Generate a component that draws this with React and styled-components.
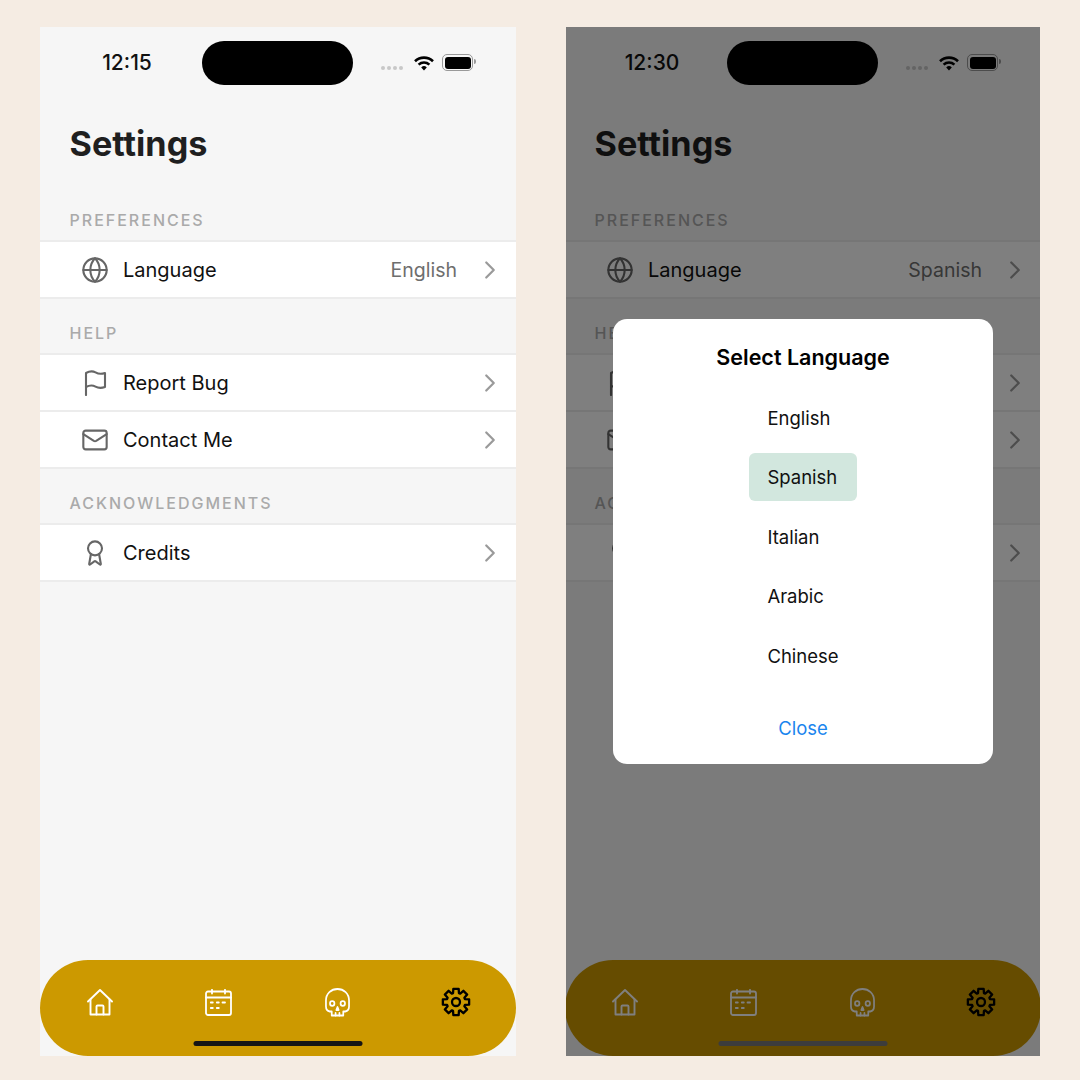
import React from "react";
import styled, { createGlobalStyle } from "styled-components";
import { Globe, Mail, Award, ChevronRight } from "lucide-react";

const Global = createGlobalStyle`
  html, body { margin: 0; padding: 0; }
  body { width: 1080px; height: 1080px; background: #f5ece3; font-family: Inter, "Noto Sans", sans-serif; overflow: hidden; }
`;

const Page = styled.div`
  display: flex;
  gap: 50px;
  padding: 27px 40px 24px;
  height: 1080px;
  box-sizing: border-box;
`;
const Phone = styled.div`
  flex: 0 0 ${(p) => p.$w}px;
  display: flex;
  background: #f6f6f6;
  overflow: hidden;
`;
const ScreenBody = styled.div`
  position: relative;
  flex: 0 0 476px;
  margin-left: ${(p) => p.$shift}px;
  display: flex;
  flex-direction: column;
`;
const StatusBar = styled.div`
  display: flex;
  align-items: flex-start;
  height: 58px;
  padding: 14px 0 0;
`;
const Clock = styled.div`
  width: 162px;
  box-sizing: border-box;
  padding: 9px 0 0 12px;
  text-align: center;
  font-size: 21px;
  line-height: 25px;
  font-weight: 500;
  color: #111;
`;
const Island = styled.div`
  width: 151px;
  height: 44px;
  border-radius: 22px;
  background: #000;
`;
const StatusIcons = styled.div`
  display: flex;
  align-items: center;
  gap: 10px;
  margin-left: 28px;
  padding-top: 14px;
`;
const SignalDots = styled.div`
  display: flex;
  gap: 2px;
  padding-top: 9px;
  margin-right: 1px;
`;
const Dot = styled.span`
  width: 4px;
  height: 4px;
  border-radius: 50%;
  background: #c8c8c8;
`;
const BatteryShell = styled.div`
  position: relative;
  width: 26px;
  height: 12px;
  padding: 1.5px;
  border: 1px solid #999;
  border-radius: 5px;
  margin: -1px 0 0 -2px;
  &::after {
    content: "";
    position: absolute;
    right: -3.5px;
    top: 4px;
    width: 2px;
    height: 5px;
    border-radius: 0 2px 2px 0;
    background: #999;
  }
`;
const BatteryFill = styled.div`
  height: 100%;
  border-radius: 3px;
  background: #000;
`;
const Title = styled.h1`
  margin: 0;
  padding: 22px 0 0 29.5px;
  font-size: 34.2px;
  line-height: 46px;
  font-weight: 650;
  color: #1f1f1f;
`;
const Sections = styled.div`
  display: flex;
  flex-direction: column;
  padding-top: 19px;
`;
const SectionLabel = styled.div`
  height: 54px;
  box-sizing: border-box;
  padding: 24px 0 0 29.5px;
  font-size: 16px;
  line-height: 20px;
  font-weight: 500;
  letter-spacing: 2px;
  color: #aaaaaa;
`;
const Group = styled.div`
  background: #fff;
  border-top: 2px solid #ececec;
`;
const Row = styled.div`
  display: flex;
  align-items: center;
  height: 55px;
  padding: 0 11px 0 41px;
  border-bottom: 2px solid #ececec;
`;
const RowIcon = styled.div`
  width: 28px;
  height: 28px;
  display: flex;
  align-items: center;
  justify-content: center;
  color: #666;
`;
const RowLabel = styled.div`
  margin-left: 14px;
  flex: 1;
  font-size: 20px;
  line-height: 26px;
  font-weight: 400;
  color: #111;
`;
const RowValue = styled.div`
  font-size: 19.5px;
  line-height: 26px;
  color: #6e6e6e;
  margin-right: 18px;
`;
const Chevron = styled(ChevronRight)`
  color: #9a9a9a;
`;
const TabBar = styled.div`
  margin-top: auto;
  height: 96px;
  border-radius: 48px;
  background: #cc9900;
  display: flex;
  align-items: center;
  justify-content: space-between;
  padding: 0 40px 12px;
  box-sizing: border-box;
`;
const Tab = styled.div`
  width: 40px;
  height: 40px;
  display: flex;
  align-items: center;
  justify-content: center;
  color: ${(p) => (p.$active ? "#000" : "#fff")};
`;
const HomeIndicator = styled.div`
  position: absolute;
  z-index: 3;
  left: 50%;
  bottom: 10px;
  transform: translateX(-50%);
  width: 169px;
  height: 5px;
  border-radius: 3px;
  background: ${(p) => p.$color};
`;
const Overlay = styled.div`
  position: absolute;
  inset: 0;
  z-index: 2;
  background: rgba(0, 0, 0, 0.5);
  display: flex;
  justify-content: center;
  padding-top: 292px;
`;
const Modal = styled.div`
  width: 380px;
  height: 445px;
  box-sizing: border-box;
  border-radius: 14px;
  background: #fff;
  display: flex;
  flex-direction: column;
  align-items: center;
  padding-top: 24px;
`;
const ModalTitle = styled.div`
  font-size: 21.5px;
  line-height: 28px;
  font-weight: 600;
  color: #000;
`;
const Options = styled.div`
  display: flex;
  flex-direction: column;
  gap: 11.5px;
  margin-top: 22.5px;
`;
const Option = styled.div`
  height: 48px;
  padding: 0 18px;
  border-radius: 6px;
  display: flex;
  align-items: center;
  font-size: 18.5px;
  color: #111;
  background: ${(p) => (p.$selected ? "#d2e7de" : "transparent")};
`;
const CloseButton = styled.div`
  margin-top: 36.5px;
  font-size: 18.5px;
  line-height: 24px;
  color: #1a85ee;
`;

const IconSvg = styled.svg`
  display: block;
  fill: none;
  stroke: currentColor;
  stroke-linecap: round;
  stroke-linejoin: round;
`;

const Wifi = () => (
  <svg width="20" height="15" viewBox="0 0 20 15" style={{ display: "block" }}>
    <path d="M1 5.2A13 13 0 0 1 19 5.2" fill="none" stroke="#000" strokeWidth="2.6" />
    <path d="M4.6 8.6A8 8 0 0 1 15.4 8.6" fill="none" stroke="#000" strokeWidth="2.6" />
    <path d="M7.2 11.4L10 14.4L12.8 11.4A4 4 0 0 0 7.2 11.4Z" fill="#000" />
  </svg>
);
const FlagIcon = () => (
  <IconSvg width="24" height="26" viewBox="0 0 24 26" strokeWidth="2.1">
    <path d="M3 25V3C7 .8 10 1 12.5 2.4S18 4.4 22 3V17C18 18.4 15 18 12.5 16.6S7 14.8 3 17" />
  </IconSvg>
);
const HomeIcon = () => (
  <IconSvg width="26" height="27" viewBox="0 0 26 27" strokeWidth="1.9">
    <path d="M1 12.5L13 1L25 12.5" />
    <path d="M3.5 10.5V25.5H22.5V10.5" />
    <path d="M9.5 25.5V17.5Q9.5 16.5 10.5 16.5H15.5Q16.5 16.5 16.5 17.5V25.5" />
  </IconSvg>
);
const CalendarIcon = () => (
  <IconSvg width="27" height="27" viewBox="0 0 27 27" strokeWidth="1.8">
    <rect x="1" y="2.5" width="25" height="23.5" rx="2" />
    <path d="M1 8.5H26M7 .8V4.5M20 .8V4.5" />
    <path d="M5.8 13.5H7.8M11.8 13.5H13.8M17.5 13.5H20M5.8 19H7.8M11.8 19H13.8" />
  </IconSvg>
);
const SkullIcon = () => (
  <IconSvg width="25" height="29" viewBox="0 0 26 29" preserveAspectRatio="none" strokeWidth="1.8">
    <path d="M7 27.5V23.5H5C2.5 23 1 21 1 18.5V12.5C1 5.5 6.5 1 13 1S25 5.5 25 12.5V18.5C25 21 23.5 23 21 23.5H19V27.5Z" />
    <circle cx="7.5" cy="15.5" r="2.3" />
    <circle cx="18.5" cy="15.5" r="2.3" />
    <path d="M13 19L14.2 22H11.8Z" />
    <path d="M11 25V27.5M15 25V27.5" />
  </IconSvg>
);
const gearPath = (() => {
  const pts = [];
  const c = 15;
  const pt = (r, t) => `${(c + r * Math.cos(t)).toFixed(2)} ${(c + r * Math.sin(t)).toFixed(2)}`;
  for (let i = 0; i < 8; i++) {
    const a = (i * Math.PI) / 4 - Math.PI / 2;
    const w = 0.2;
    pts.push(`${i ? "L" : "M"}${pt(9.4, a - w - 0.12)}`);
    pts.push(`L${pt(13.4, a - w)}`);
    pts.push(`L${pt(13.4, a + w)}`);
    pts.push(`L${pt(9.4, a + w + 0.12)}`);
  }
  return pts.join(" ") + " Z";
})();
const GearIcon = () => (
  <IconSvg width="30" height="30" viewBox="0 0 30 30" strokeWidth="2.3">
    <path d={gearPath} />
    <circle cx="15" cy="15" r="4" />
  </IconSvg>
);

const sections = [
  { label: "PREFERENCES", rows: [{ icon: <Globe size={28} strokeWidth={1.8} />, text: "Language", lang: true }] },
  {
    label: "HELP",
    rows: [
      { icon: <FlagIcon />, text: "Report Bug" },
      { icon: <Mail size={28} strokeWidth={1.8} />, text: "Contact Me" },
    ],
  },
  { label: "ACKNOWLEDGMENTS", rows: [{ icon: <Award size={28} strokeWidth={1.8} />, text: "Credits" }] },
];
const languages = ["English", "Spanish", "Italian", "Arabic", "Chinese"];

const Screen = ({ width, shift, time, language, indicator, children }) => (
  <Phone $w={width}>
    <ScreenBody $shift={shift}>
      <StatusBar>
        <Clock>{time}</Clock>
        <Island />
        <StatusIcons>
          <SignalDots>
            <Dot />
            <Dot />
            <Dot />
            <Dot />
          </SignalDots>
          <Wifi />
          <BatteryShell>
            <BatteryFill />
          </BatteryShell>
        </StatusIcons>
      </StatusBar>
      <Title>Settings</Title>
      <Sections>
        {sections.map((s) => (
          <React.Fragment key={s.label}>
            <SectionLabel>{s.label}</SectionLabel>
            <Group>
              {s.rows.map((r) => (
                <Row key={r.text}>
                  <RowIcon>{r.icon}</RowIcon>
                  <RowLabel>{r.text}</RowLabel>
                  {r.lang && <RowValue>{language}</RowValue>}
                  <Chevron size={30} strokeWidth={1.8} />
                </Row>
              ))}
            </Group>
          </React.Fragment>
        ))}
      </Sections>
      <TabBar>
        <Tab><HomeIcon /></Tab>
        <Tab><CalendarIcon /></Tab>
        <Tab><SkullIcon /></Tab>
        <Tab $active><GearIcon /></Tab>
      </TabBar>
      <HomeIndicator $color={indicator} />
      {children}
    </ScreenBody>
  </Phone>
);

export default function App() {
  return (
    <>
      <Global />
      <Page>
        <Screen width={476} shift={0} time="12:15" language="English" indicator="#151515" />
        <Screen width={474} shift={-1} time="12:30" language="Spanish" indicator="#3c3c3c">
          <Overlay>
            <Modal>
              <ModalTitle>Select Language</ModalTitle>
              <Options>
                {languages.map((l) => (
                  <Option key={l} $selected={l === "Spanish"}>{l}</Option>
                ))}
              </Options>
              <CloseButton>Close</CloseButton>
            </Modal>
          </Overlay>
        </Screen>
      </Page>
    </>
  );
}
